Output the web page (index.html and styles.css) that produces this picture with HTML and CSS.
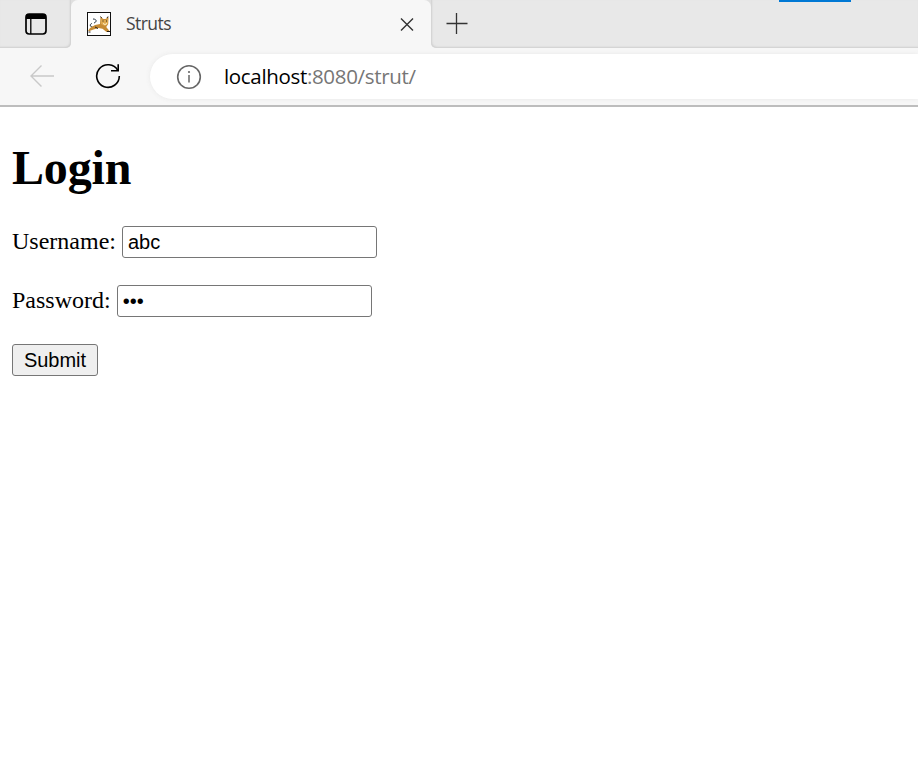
FILE: index.html
```html
<!DOCTYPE html>
<html lang="en">
<head>
<meta charset="utf-8">
<title>Struts</title>
<link rel="stylesheet" href="styles.css">
</head>
<body>
<header class="browser">
  <div class="tabstrip">
    <div class="strip-left">
      <svg width="22" height="22" viewBox="0 0 22 22"><rect x="1" y="1" width="20" height="20" rx="3.2" fill="none" stroke="#000" stroke-width="1.7"/><path d="M1 6V4a3 3 0 0 1 3-3h14a3 3 0 0 1 3 3v2z"/><path d="M5.800 5v16" stroke="#000" stroke-width="1.3"/></svg>
    </div>
    <div class="tab-wrap">
      <div class="tab">
        <svg class="favicon" width="24" height="24" viewBox="0 0 24 24">
          <rect x=".5" y=".5" width="23" height="23" fill="#fff" stroke="#111"/>
          <path d="M7 15C3 16 2 12 5 11.500M7 11c3-1 3-4-1-4" fill="none" stroke="#263441" stroke-width="1"/>
          <path d="M1 19l2-3 5-3 5-1 .5-7 3 2h2l3-2-.3 7-2 3 3.300 4v1h-3l-4-3.200-4-.8-5 1.500-4 1.500z" fill="#c58b35"/>
          <path d="M14 7l2 1h3l2-1v5l-3 2-4-2z" fill="#dfaa50"/>
          <path d="M13.500 4.500l1.200 1.500M21 4.500l-1 1.500M15.500 9h1M19 9h1M8 15l3 1.500M1.500 20h2M20 19.500h3" stroke="#292017"/>
          <path d="M16 11.500l2 1 2-1" fill="none" stroke="#fff2cc"/>
        </svg>
        <span class="tab-title">Struts</span>
        <svg width="14" height="14" viewBox="0 0 14 14"><path d="M1 1.500l12 12M13 1.500l-12 12" stroke="#333" stroke-width="1.4"/></svg>
      </div>
    </div>
    <div class="strip-right">
      <svg width="22" height="22" viewBox="0 0 22 22"><path d="M.5 10.500h21M10.500 0v21" stroke="#333" stroke-width="1.3"/></svg>
      <i class="accent"></i>
    </div>
  </div>
  <div class="toolbar">
    <svg class="back" width="26" height="24" viewBox="0 0 26 24"><path d="M25 12H2M12.500 1.500L2 12l10.500 10.500" fill="none" stroke="#c9c9c9" stroke-width="1.4"/></svg>
    <svg class="reload" width="26" height="26" viewBox="0 0 26 26"><path d="M24.300 13A11.300 11.300 0 1 1 22.800 7.400" fill="none" stroke="#000" stroke-width="1.600"/><path d="M23.200 1.300v6.500H16" fill="none" stroke="#000" stroke-width="1.600"/></svg>
    <div class="address">
      <svg width="26" height="26" viewBox="0 0 26 26"><circle cx="13" cy="13" r="11.300" fill="none" stroke="#666" stroke-width="1.600"/><path d="M13 11v7.500" stroke="#666" stroke-width="1.500"/><circle cx="13" cy="8" r="1.100" fill="#666"/></svg>
      <span class="url"><b>localhost</b>:8080/strut/</span>
    </div>
  </div>
</header>
<main>
  <h1>Login</h1>
  <form>
    <div class="row"><label for="user">Username:</label><input id="user" type="text" value="abc"></div>
    <div class="row"><label for="pass">Password:</label><input id="pass" type="password" value="abc"></div>
    <button type="button">Submit</button>
  </form>
</main>
</body>
</html>
```
FILE: styles.css
```css
* { box-sizing: border-box; }
body { margin: 0; background: #fff; color: #000; overflow: hidden; }
svg { display: block; flex: none; }
.browser { height: 107px; background: #f7f7f7; border-bottom: 2px solid #bdbdbd; font-family: "Open Sans", sans-serif; }
.tabstrip { display: flex; height: 48px; }
.strip-left { width: 71px; padding: 13px 0 0 25px; background: #e8e8e8; border-radius: 0 0 5px 0; box-shadow: inset -1px -1px 2px #cfcfcf; }
.tab-wrap { width: 360px; background: linear-gradient(#e0e0e0 10px, #f7f7f7 10px); }
.tab { display: flex; align-items: center; height: 48px; padding: 0 17px 0 16px; background: #f7f7f7; border-radius: 7px 7px 0 0; }
.tab-title { margin: -2px 0 0 15px; flex: 1; font-size: 17.5px; letter-spacing: -.55px; color: #444; line-height: 24px; }
.strip-right { position: relative; flex: 1; padding: 13px 0 0 15px; background: #e8e8e8; border-radius: 0 0 0 5px; box-shadow: inset 1px -1px 2px #cfcfcf; }
.accent { position: absolute; left: 348px; top: 0; width: 72px; height: 2px; background: #0078d4; }
.toolbar { display: flex; align-items: center; height: 57px; background: #f7f7f7; }
.back { margin: -2px 0 0 29px; }
.reload { margin: -1px 0 0 40px; }
.address { flex: 1; display: flex; align-items: center; height: 45px; margin-left: 29px; padding-left: 26px; background: #fff; border-radius: 23px 0 0 23px; box-shadow: 0 0 5px #e8e8e8; }
.url { margin: -1px 0 0 22px; font-size: 20.5px; letter-spacing: -.33px; line-height: 28px; color: #767676; white-space: nowrap; }
.url b { font-weight: 400; color: #000; }
main { padding: 33px 12px; font-family: "Liberation Serif", serif; font-size: 24px; }
h1 { margin: 0 0 31px; font-size: 48px; letter-spacing: -.15px; line-height: 55px; }
.row { display: flex; align-items: center; height: 32px; margin-bottom: 27px; }
label { margin: -2px 6px 0 0; line-height: 28px; }
input { width: 255px; height: 32px; margin: 0; padding: 1px 5px; border: 1px solid #767676; border-radius: 3px; background: #fff; color: #000; font: 20px "Liberation Sans", sans-serif; }
button { display: block; width: 86px; height: 32px; padding: 0; border: 1px solid #767676; border-radius: 3px; background: #efefef; color: #000; font: 20px "Liberation Sans", sans-serif; }
```
